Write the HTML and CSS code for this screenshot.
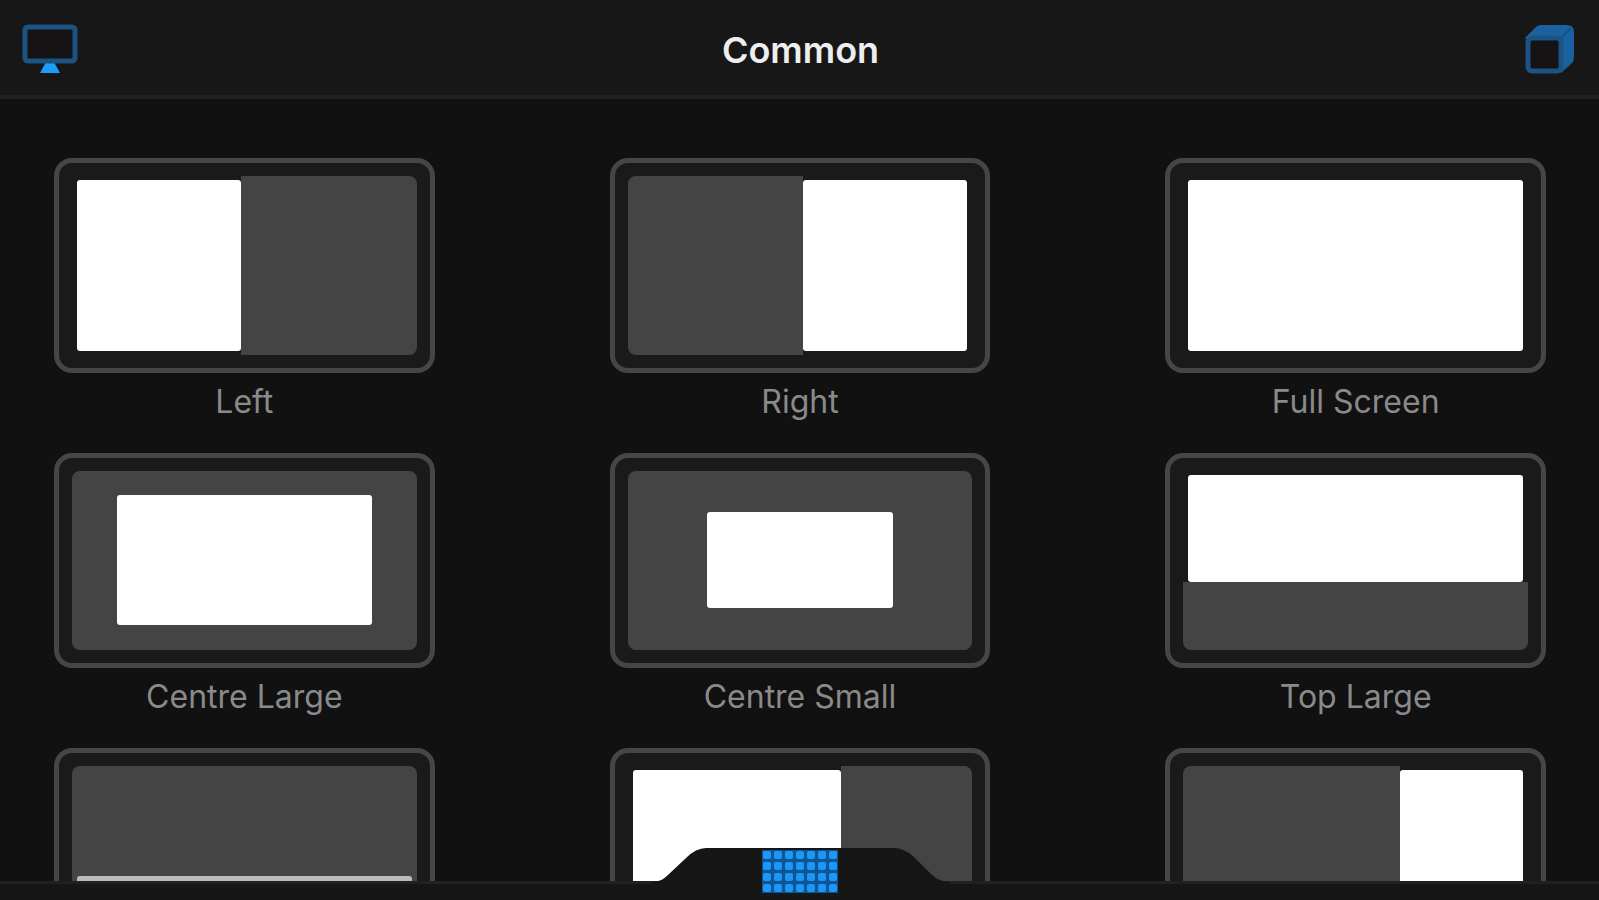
FILE: index.html
```html
<!DOCTYPE html>
<html lang="en">
<head>
<meta charset="utf-8">
<title>Common</title>
<link rel="stylesheet" href="styles.css">
</head>
<body>
<div class="app">
  <header class="topbar">
    <button class="icon-button" type="button" aria-label="Displays">
      <svg width="56" height="52" viewBox="0 0 56 52">
        <path d="M24 38h8l6 11H18z" fill="#1c9dfa"/>
        <rect x="3" y="3" width="50" height="34" rx="3" fill="#151313" stroke="#1b5483" stroke-width="5"/>
      </svg>
    </button>
    <h1 class="title">Common</h1>
    <button class="icon-button" type="button" aria-label="Windows">
      <svg width="52" height="52" viewBox="0 0 52 52">
        <path d="M2 14 13 3Q15 1 18 1H44Q51 1 51 8V33Q51 37 49 39L38 49z" fill="#1a629f"/>
        <path d="M38 14 48 4" stroke="#175283" stroke-width="2"/>
        <rect x="5" y="14" width="33" height="33" rx="4" fill="#151313" stroke="#1b5483" stroke-width="5"/>
      </svg>
    </button>
  </header>

  <main class="layouts">
    <button class="layout" type="button">
      <span class="screen"><span class="desk"><span class="window half-width dock-left"></span></span></span>
      <span class="label">Left</span>
    </button>
    <button class="layout" type="button">
      <span class="screen"><span class="desk to-right"><span class="window half-width dock-right"></span></span></span>
      <span class="label">Right</span>
    </button>
    <button class="layout" type="button">
      <span class="screen"><span class="desk"><span class="window"></span></span></span>
      <span class="label">Full Screen</span>
    </button>
    <button class="layout" type="button">
      <span class="screen"><span class="desk centred"><span class="window floating centre-large"></span></span></span>
      <span class="label">Centre Large</span>
    </button>
    <button class="layout" type="button">
      <span class="screen"><span class="desk centred"><span class="window floating centre-small"></span></span></span>
      <span class="label">Centre Small</span>
    </button>
    <button class="layout" type="button">
      <span class="screen"><span class="desk"><span class="window large-height dock-top"></span></span></span>
      <span class="label">Top Large</span>
    </button>
    <button class="layout" type="button" aria-label="Bottom">
      <span class="screen"><span class="desk to-bottom"><span class="window small-height dock-bottom"></span></span></span>
    </button>
    <button class="layout" type="button" aria-label="Left large">
      <span class="screen"><span class="desk"><span class="window large-width dock-left"></span></span></span>
    </button>
    <button class="layout" type="button" aria-label="Right small">
      <span class="screen"><span class="desk to-right"><span class="window small-width dock-right"></span></span></span>
    </button>
  </main>

  <footer class="dock">
    <button class="dock-tab" type="button" aria-label="Grid">
      <svg width="300" height="52" viewBox="0 0 300 52">
        <path d="M0 34C9 34 13 32 19 26L36 10Q46 0 56 0H244Q254 0 264 9L281 26Q289 34 300 34V52H0z" fill="#161616"/>
        <defs>
          <pattern id="cells" x="112" y="2" width="11" height="11" patternUnits="userSpaceOnUse">
            <rect width="11" height="11" fill="#0d5596"/>
            <rect x="1" y="1" width="8" height="8" rx="2" fill="#1c97f6"/>
          </pattern>
        </defs>
        <rect x="112" y="2" width="76" height="43" fill="url(#cells)"/>
      </svg>
    </button>
  </footer>
</div>
</body>
</html>
```
FILE: styles.css
```css
* {
  box-sizing: border-box;
}

body {
  margin: 0;
  background: #111;
  color: #eee;
  font-family: Inter, "Liberation Sans", sans-serif;
}

button {
  margin: 0;
  padding: 0;
  border: 0;
  background: none;
  color: inherit;
  font: inherit;
  cursor: pointer;
}

svg {
  display: block;
}

.app {
  display: grid;
  grid-template-rows: auto minmax(0, 1fr) auto;
  height: 100vh;
}

.topbar {
  display: flex;
  align-items: center;
  justify-content: space-between;
  padding: 24px 24px 19px 22px;
  border-bottom: 4px solid #212121;
  background: #171717;
}

.title {
  margin: 0;
  font-size: 36px;
  line-height: 52px;
  font-weight: 600;
}

.layouts {
  display: grid;
  grid-template-columns: repeat(3, 1fr);
  align-content: start;
  gap: 32px 175px;
  padding: 59px 53px 0 54px;
  overflow: hidden;
}

.layout {
  display: flex;
  flex-direction: column;
  gap: 10px;
}

.screen {
  display: flex;
  width: 100%;
  aspect-ratio: 381 / 215;
  padding: 13px;
  border: 5px solid #464646;
  border-radius: 18px;
  background: #1a1a1a;
}

.desk {
  display: flex;
  flex: 1;
  border-radius: 8px;
  background: #444;
}

.to-right {
  justify-content: flex-end;
}

.to-bottom {
  align-items: flex-end;
}

.centred {
  align-items: center;
  justify-content: center;
}

.window {
  display: flex;
  width: 100%;
  height: 100%;
  padding: 4px 5px;
  background: #1a1a1a;
}

.window::before {
  content: "";
  flex: 1;
  border-radius: 3px;
  background: #fff;
}

.dock-left {
  padding-right: 0;
}

.dock-right {
  padding-left: 0;
}

.dock-top {
  padding-bottom: 0;
}

.dock-bottom {
  padding-top: 0;
  background: #444;
}

.dock-bottom::before {
  background: #bbb;
}

.floating {
  padding: 0;
  background: none;
}

.half-width {
  width: 49%;
}

.large-width {
  width: 62%;
}

.small-width {
  width: 37%;
}

.large-height {
  height: 62%;
}

.small-height {
  height: 38%;
}

.centre-large {
  width: 74%;
  height: 73%;
}

.centre-small {
  width: 54%;
  height: 54%;
}

.label {
  width: 100%;
  color: #8a8a8a;
  font-size: 32px;
  line-height: 38px;
  text-align: center;
}

.dock {
  position: relative;
  height: 19px;
  border-top: 3px solid #212121;
  background: #161616;
}

.dock-tab {
  position: absolute;
  bottom: 0;
  left: 50%;
  transform: translateX(-50%);
}
```
